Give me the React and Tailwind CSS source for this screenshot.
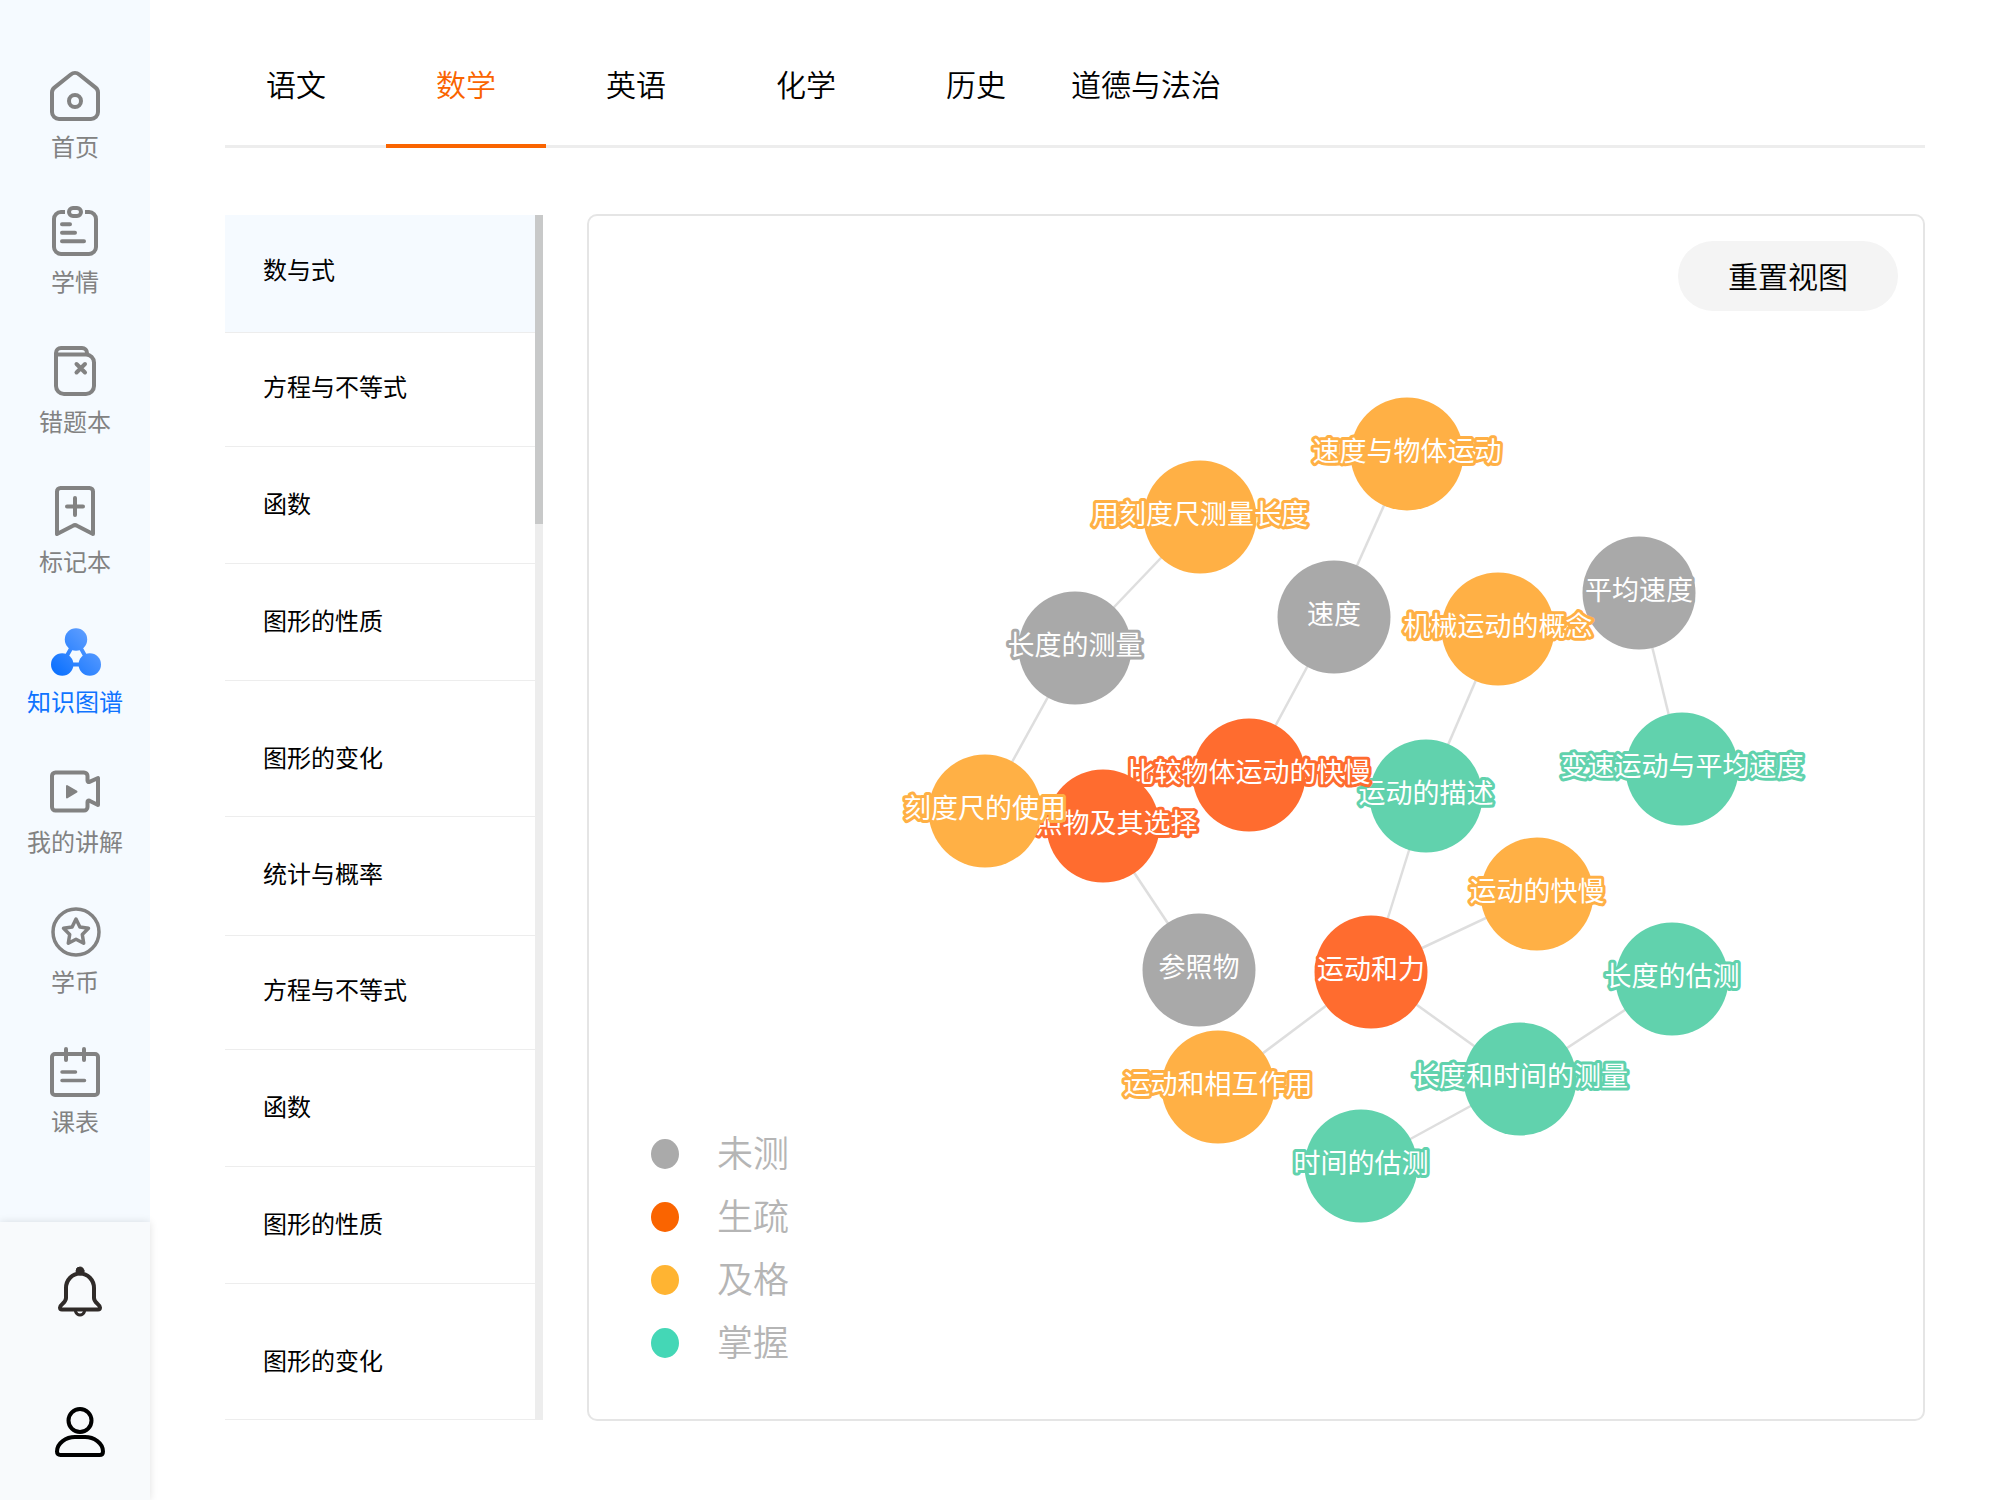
import { useState } from 'react';

// ── Icons (50×50 grid) ───────────────────────────────────────────────────────
function Icon({ children, width = 4 }) {
  return (
    <svg
      viewBox="0 0 50 50"
      className="h-[50px] w-[50px] shrink-0 overflow-visible"
      fill="none"
      stroke="currentColor"
      strokeWidth={width}
      strokeLinecap="round"
      strokeLinejoin="round"
      aria-hidden="true"
    >
      {children}
    </svg>
  );
}

const HomeIcon = () => (
  <Icon>
    <path d="M2 21.5c0-2 .8-3.6 2.4-4.9L20.8 3.5a6.6 6.6 0 0 1 8.4 0l16.4 13.1c1.6 1.3 2.4 2.9 2.4 4.9V41a7 7 0 0 1-7 7H9a7 7 0 0 1-7-7Z" />
    <circle cx="25" cy="30" r="6" />
  </Icon>
);

const ReportIcon = () => (
  <Icon>
    <path strokeLinecap="butt" d="M15 6h-4a7 7 0 0 0-7 7v28a7 7 0 0 0 7 7h28a7 7 0 0 0 7-7V13a7 7 0 0 0-7-7h-4" />
    <rect x="19" y="2" width="12" height="8" rx="4" />
    <path d="M12 18.2h8M12 26.8h13M12 35.2h22" />
  </Icon>
);

const MistakeIcon = () => (
  <Icon>
    <path d="M6 8.5h30a8 8 0 0 1 8 8V40a8 8 0 0 1-8 8H14a8 8 0 0 1-8-8V7a5 5 0 0 1 5-5h21a5 5 0 0 1 5 5v1" />
    <path d="m26.5 18 8.5 8.5M35 18l-8.5 8.5" />
  </Icon>
);

const BookmarkIcon = () => (
  <Icon>
    <path d="M7 48V5.5A3.5 3.5 0 0 1 10.5 2h29A3.5 3.5 0 0 1 43 5.5V48l-16-8.3a4 4 0 0 0-4 0Z" />
    <path d="M25 12v17M17 20.5h16" />
  </Icon>
);

const GraphIcon = () => (
  <svg viewBox="0 0 50 50" className="h-[50px] w-[50px] shrink-0 overflow-visible" aria-hidden="true">
    <defs>
      <linearGradient id="graph-fill" gradientUnits="userSpaceOnUse" x1="6" y1="45" x2="40" y2="11">
        <stop offset="0" stopColor="#0f73ff" />
        <stop offset="1" stopColor="#5b9cff" />
      </linearGradient>
    </defs>
    <path d="M26 13.5 12 38.5h28Z" fill="none" stroke="url(#graph-fill)" strokeWidth="4" />
    <circle cx="26" cy="13.5" r="11.2" fill="url(#graph-fill)" />
    <circle cx="12.2" cy="38.5" r="11.2" fill="url(#graph-fill)" />
    <circle cx="39.8" cy="38.5" r="11.2" fill="url(#graph-fill)" />
  </svg>
);

const VideoIcon = () => (
  <Icon>
    <path d="M5.5 6.5H34A3.5 3.5 0 0 1 37.500 10V14.500c0 1.300.8 1.800 2 1.300L48 12v27l-8.500-4.300c-1.200-.5-2 0-2 1.300v5A3.500 3.500 0 0 1 34 44.500H5.500A3.500 3.500 0 0 1 2 41V10a3.500 3.500 0 0 1 3.500-3.500Z" />
    <path d="M17 20v11.5l9.500-5.800Z" fill="currentColor" strokeWidth="2" />
  </Icon>
);

const CoinIcon = () => (
  <Icon width={3.5}>
    <circle cx="26" cy="26" r="23" />
    <path d="m26 13 3.9 8 8.6 1.3-6.2 6.2 1.4 8.7-7.7-4-7.7 4 1.4-8.7-6.2-6.2 8.6-1.3Z" />
  </Icon>
);

const ScheduleIcon = () => (
  <Icon>
    <rect x="2" y="8" width="46" height="41" rx="3" />
    <path d="M16 3v11M34 3v11" />
    <path strokeWidth="3.5" d="M12 26h13.5M12 34.5h22.5" />
  </Icon>
);

const BellIcon = () => (
  <Icon>
    <circle cx="25" cy="4" r="4" fill="currentColor" strokeWidth="1" />
    <path d="M11 21a14 14.5 0 0 1 28 0v10c0 5 6 6 6 9.5 0 1.5-1 2-2 2H7c-1 0-2-.5-2-2C5 37 11 36 11 31Z" />
    <path strokeWidth="3" d="M20.5 44.5c1 2.7 2.5 3.5 4.5 3.5s3.5-.8 4.5-3.5" />
  </Icon>
);

const UserIcon = () => (
  <Icon>
    <circle cx="25" cy="13.5" r="11.5" />
    <path d="M2 44.5C2 36 11 30 20 30h10c9 0 18 6 18 14.5 0 2.3-1.2 3.5-3.5 3.500h-39C3.200 48 2 46.800 2 44.500Z" />
  </Icon>
);

// ── Data ─────────────────────────────────────────────────────────────────────
const NAV = [
  { label: '首页', Glyph: HomeIcon },
  { label: '学情', Glyph: ReportIcon },
  { label: '错题本', Glyph: MistakeIcon },
  { label: '标记本', Glyph: BookmarkIcon },
  { label: '知识图谱', Glyph: GraphIcon, active: true },
  { label: '我的讲解', Glyph: VideoIcon },
  { label: '学币', Glyph: CoinIcon },
  { label: '课表', Glyph: ScheduleIcon },
];

const SUBJECTS = ['语文', '数学', '英语', '化学', '历史', '道德与法治'];

const CHAPTERS = [
  { label: '数与式', size: 'h-[118px] pt-9' },
  { label: '方程与不等式', size: 'h-[114px] pt-[35px]' },
  { label: '函数', size: 'h-[117px] pt-[38px]' },
  { label: '图形的性质', size: 'h-[117px] pt-[38px]' },
  { label: '图形的变化', size: 'h-[136px] pt-[58px]' },
  { label: '统计与概率', size: 'h-[119px] pt-[38px]' },
  { label: '方程与不等式', size: 'h-[114px] pt-[35px]' },
  { label: '函数', size: 'h-[117px] pt-[38px]' },
  { label: '图形的性质', size: 'h-[117px] pt-[38px]' },
  { label: '图形的变化', size: 'h-[136px] pt-[58px]' },
];

const LEGEND = [
  { label: '未测', dot: 'bg-[#aaaaaa]' },
  { label: '生疏', dot: 'bg-[#fa6400]' },
  { label: '及格', dot: 'bg-[#ffb432]' },
  { label: '掌握', dot: 'bg-[#44d7b6]' },
];

const LEVEL_COLORS = {
  untested: '#a9a9a9',
  weak: '#ff6c2f',
  pass: '#ffb045',
  mastered: '#61d2ad',
};

// Later nodes are painted over earlier ones
const NODES = [
  { id: 'speedMotion', label: '速度与物体运动', x: 818, y: 237, level: 'pass' },
  { id: 'rulerMeasure', label: '用刻度尺测量长度', x: 611, y: 300, level: 'pass' },
  { id: 'length', label: '长度的测量', x: 486, y: 431, level: 'untested' },
  { id: 'speed', label: '速度', x: 745, y: 400, level: 'untested' },
  { id: 'average', label: '平均速度', x: 1050, y: 376, level: 'untested' },
  { id: 'mechanical', label: '机械运动的概念', x: 909, y: 412, level: 'pass' },
  { id: 'variable', label: '变速运动与平均速度', x: 1093, y: 552, level: 'mastered' },
  { id: 'describe', label: '运动的描述', x: 837, y: 579, level: 'mastered' },
  { id: 'compare', label: '比较物体运动的快慢', x: 660, y: 558, level: 'weak' },
  { id: 'refChoice', label: '参照物及其选择', x: 514, y: 609, level: 'weak' },
  { id: 'rulerUse', label: '刻度尺的使用', x: 396, y: 594, level: 'pass' },
  { id: 'fastSlow', label: '运动的快慢', x: 948, y: 677, level: 'pass' },
  { id: 'reference', label: '参照物', x: 610, y: 753, level: 'untested' },
  { id: 'force', label: '运动和力', x: 782, y: 755, level: 'weak' },
  { id: 'lengthGuess', label: '长度的估测', x: 1083, y: 762, level: 'mastered' },
  { id: 'lengthTime', label: '长度和时间的测量', x: 931, y: 862, level: 'mastered' },
  { id: 'interact', label: '运动和相互作用', x: 629, y: 870, level: 'pass' },
  { id: 'timeGuess', label: '时间的估测', x: 772, y: 949, level: 'mastered' },
];

const EDGES = [
  ['rulerMeasure', 'length'],
  ['length', 'rulerUse'],
  ['speedMotion', 'speed'],
  ['speed', 'compare'],
  ['mechanical', 'describe'],
  ['average', 'variable'],
  ['describe', 'force'],
  ['force', 'fastSlow'],
  ['force', 'interact'],
  ['force', 'lengthTime'],
  ['lengthTime', 'lengthGuess'],
  ['lengthTime', 'timeGuess'],
  ['refChoice', 'reference'],
];

const NODE_BY_ID = Object.fromEntries(NODES.map((n) => [n.id, n]));

// ── Sidebar ──────────────────────────────────────────────────────────────────
function Sidebar() {
  return (
    <aside className="flex w-[150px] shrink-0 flex-col bg-[#f5faff]">
      <nav className="flex flex-col pt-[71px]">
        {NAV.map(({ label, Glyph, active }) => (
          <a
            key={label}
            href="#"
            aria-current={active ? 'page' : undefined}
            className={`mb-[47px] flex flex-col items-center gap-[7px] first:mb-[42px] ${
              active ? 'text-[#0f73ff]' : 'text-[#828282]'
            }`}
          >
            <Glyph />
            <span className="text-2xl leading-9">{label}</span>
          </a>
        ))}
      </nav>

      <div className="mt-auto flex flex-col items-center gap-[90px] bg-[#f8fafc] pt-[45px] pb-[43px] pl-2.5 shadow-[0_0_8px_rgba(0,0,0,0.12)]">
        <button type="button" aria-label="通知" className="text-[#302b29]">
          <BellIcon />
        </button>
        <button type="button" aria-label="个人中心" className="text-black">
          <UserIcon />
        </button>
      </div>
    </aside>
  );
}

// ── Knowledge graph ──────────────────────────────────────────────────────────
function KnowledgeGraph() {
  return (
    <svg viewBox="0 -1 1334 1203" className="absolute inset-0 h-full w-full">
      {EDGES.map(([from, to]) => (
        <line
          key={`${from}-${to}`}
          x1={NODE_BY_ID[from].x}
          y1={NODE_BY_ID[from].y}
          x2={NODE_BY_ID[to].x}
          y2={NODE_BY_ID[to].y}
          stroke="#dedede"
          strokeWidth="2.5"
        />
      ))}
      {NODES.map(({ id, label, x, y, level }) => (
        <g key={id}>
          <circle cx={x} cy={y} r="56.5" fill={LEVEL_COLORS[level]} />
          <text
            x={x}
            y={y + 7}
            textAnchor="middle"
            fill="#ffffff"
            stroke={LEVEL_COLORS[level]}
            strokeWidth="6"
            strokeLinejoin="round"
            paintOrder="stroke"
            className="text-[27px]"
          >
            {label}
          </text>
        </g>
      ))}
    </svg>
  );
}

export default function App() {
  const [subject, setSubject] = useState('数学');
  const [chapter, setChapter] = useState(0);

  return (
    <div className="flex min-h-screen bg-white font-['Noto_Sans_CJK_SC',sans-serif] text-black">
      <Sidebar />

      <main className="flex min-w-0 flex-1 flex-col px-[75px] pt-[26px] pb-20">
        {/* ── Subject tabs ── */}
        <div className="border-b-[3px] border-[#ededed]">
          <div role="tablist" className="-mb-[3px] -ml-[9px] flex gap-2.5">
            {SUBJECTS.map((name) => (
              <button
                key={name}
                type="button"
                role="tab"
                aria-selected={subject === name}
                onClick={() => setSubject(name)}
                className={`h-[122px] w-40 border-b-4 pb-[5px] text-3xl font-[350] whitespace-nowrap ${
                  subject === name ? 'border-[#fa6400] text-[#fa6400]' : 'border-transparent'
                }`}
              >
                {name}
              </button>
            ))}
          </div>
        </div>

        <div className="mt-[67px] flex gap-11">
          {/* ── Chapter list ── */}
          <div className="flex w-[318px] shrink-0">
            <ul className="flex-1">
              {CHAPTERS.map(({ label, size }, i) => (
                <li key={i}>
                  <button
                    type="button"
                    onClick={() => setChapter(i)}
                    className={`flex w-full items-start border-b border-[#ededed] pl-[38px] text-2xl leading-9 ${size} ${
                      chapter === i ? 'bg-[#f5faff]' : ''
                    }`}
                  >
                    {label}
                  </button>
                </li>
              ))}
            </ul>
            <div className="w-2 bg-[#ededed]">
              <div className="h-[309px] bg-[#c8c9c9]" />
            </div>
          </div>

          {/* ── Graph panel ── */}
          <section className="relative -my-px flex min-w-0 flex-1 flex-col justify-between rounded-[10px] border-2 border-[#e5e5e5]">
            <KnowledgeGraph />

            <button
              type="button"
              className="relative mt-[25px] mr-[25px] h-[70px] w-[220px] self-end rounded-full bg-[#f4f4f4] pb-0.5 text-3xl font-[350]"
            >
              重置视图
            </button>

            <ul className="relative mb-[45px] ml-[62px] self-start">
              {LEGEND.map(({ label, dot }) => (
                <li key={label} className="flex h-[63px] items-center gap-[38px]">
                  <span className={`h-[30px] w-7 rounded-[50%] ${dot}`} />
                  <span className="pb-1.5 text-4xl font-[350] text-[#b5b5b5]">{label}</span>
                </li>
              ))}
            </ul>
          </section>
        </div>
      </main>
    </div>
  );
}
